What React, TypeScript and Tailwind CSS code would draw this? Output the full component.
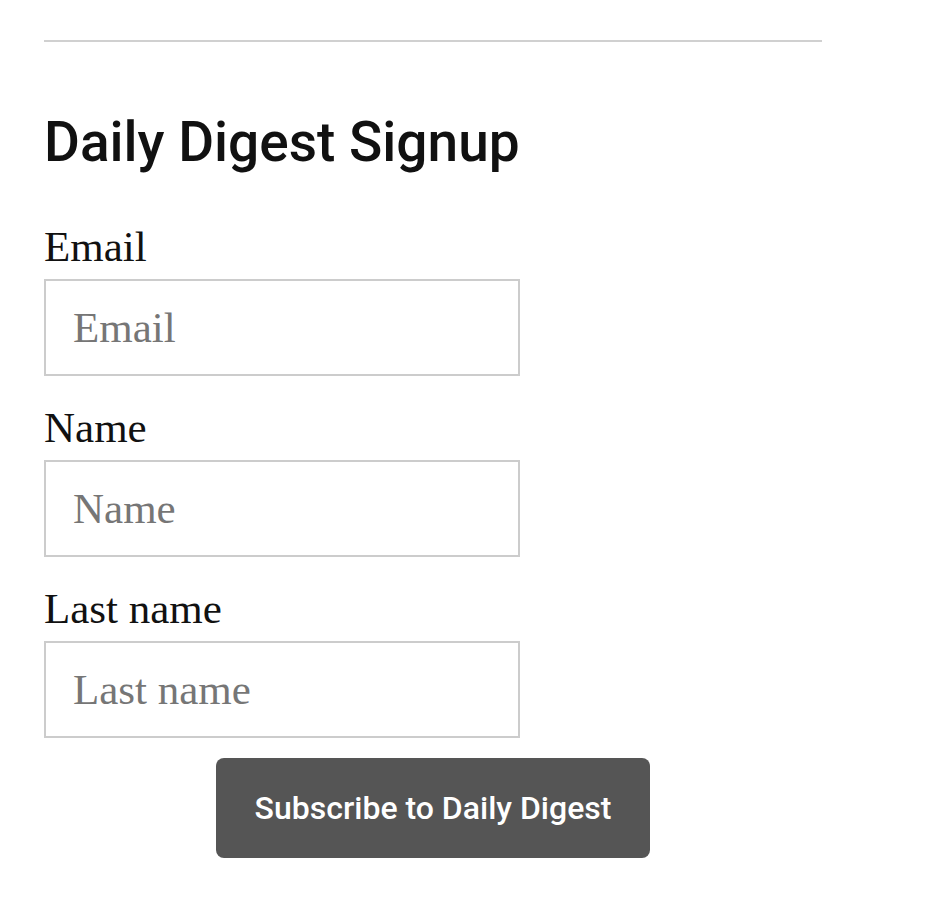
import React from "react";

const serif = "font-['Liberation_Serif','Times_New_Roman',serif]";

type FieldProps = {
  label: string;
  name: string;
  type?: string;
};

const Field: React.FC<FieldProps> = ({ label, name, type = "text" }) => (
  <div className="mt-[28px] first:mt-0">
    <label htmlFor={name} className={`block text-[43px] leading-[48px] text-[#111] ${serif}`}>
      {label}
    </label>
    <input
      id={name}
      name={name}
      type={type}
      placeholder={label}
      className={`mt-[8px] block h-[97px] w-[476px] border-2 border-[#cccccc] bg-white pl-[27px] text-[43px] text-[#111] placeholder:text-[#767676] outline-none ${serif}`}
    />
  </div>
);

export default function App() {
  return (
    <div className="min-h-screen bg-white px-[44px] pt-[40px]">
      <div className="w-[778px]">
        <hr className="border-0 border-t-2 border-[#d0d0d0]" />

        <h2 className="mt-[67px] font-['Roboto',sans-serif] text-[55px] font-medium leading-[67px] text-[#111]">
          Daily Digest Signup
        </h2>

        {/* Form */}
        <form className="mt-[47px]" onSubmit={(e) => e.preventDefault()}>
          <Field label="Email" name="email" type="email" />
          <Field label="Name" name="name" />
          <Field label="Last name" name="lastName" />

          <div className="mt-[20px] flex justify-center">
            <button
              type="submit"
              className="h-[100px] rounded-[8px] bg-[#555555] px-[39px] font-['Roboto',sans-serif] text-[32px] font-medium text-white"
            >
              Subscribe to Daily Digest
            </button>
          </div>
        </form>
      </div>
    </div>
  );
}
